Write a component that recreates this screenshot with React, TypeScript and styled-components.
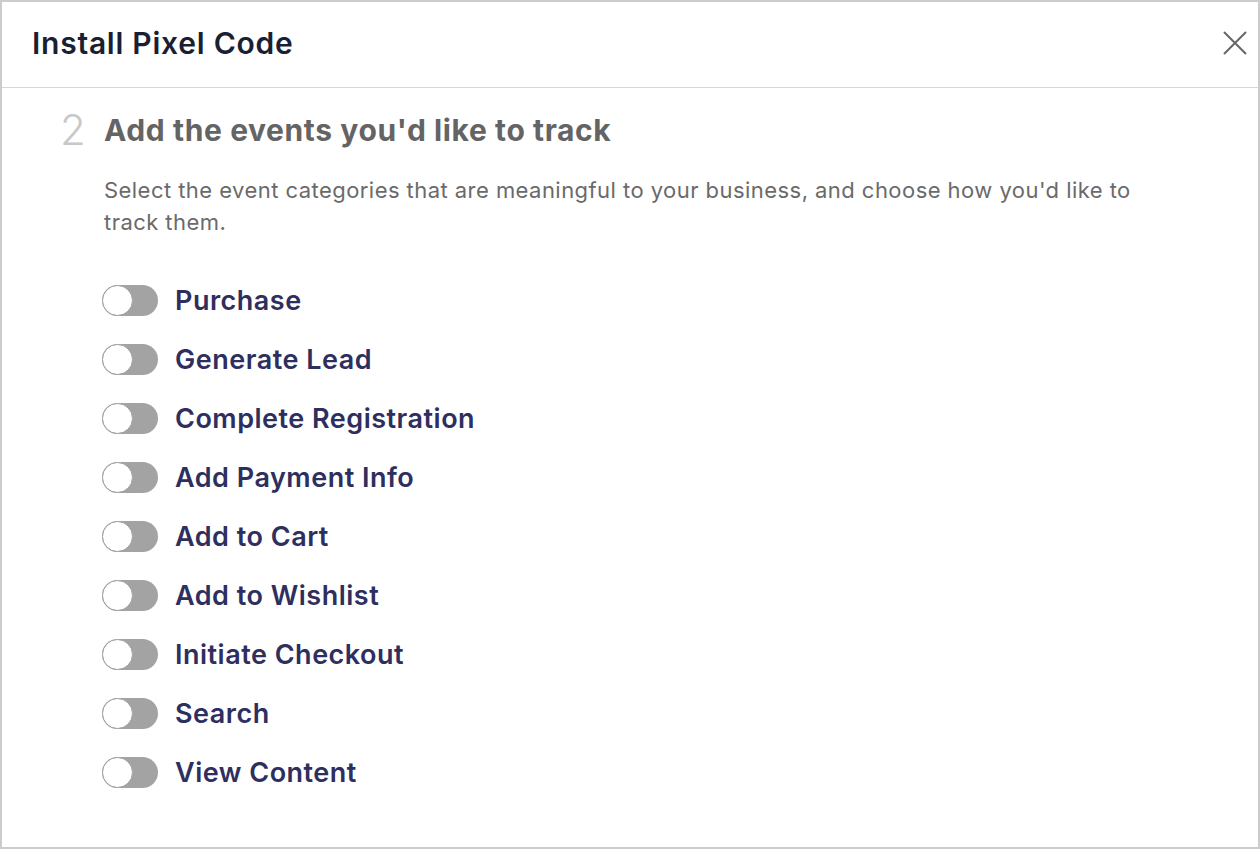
import React from "react";
import styled, { createGlobalStyle } from "styled-components";

const Global = createGlobalStyle`
  html, body { margin: 0; padding: 0; background: #fff; }
  body { font-family: Inter, "Noto Sans", sans-serif; }
`;

const Frame = styled.div`
  box-sizing: border-box;
  width: 1260px;
  height: 849px;
  border: 2px solid #cccccc;
  background: #fff;
  display: flex;
  flex-direction: column;
`;

const Header = styled.header`
  height: 85px;
  border-bottom: 1px solid #d6d2f2;
  display: flex;
  align-items: center;
  justify-content: space-between;
  padding: 0 10px 0 30px;
`;

const Title = styled.h1`
  margin: 0 0 4px;
  font-size: 30px;
  font-weight: 600;
  color: #1a1f33;
  letter-spacing: 0.75px;
`;

const CloseButton = styled.button`
  border: 0;
  background: none;
  padding: 0;
  width: 26px;
  height: 26px;
  margin-bottom: 4px;
  display: flex;
  align-items: center;
  justify-content: center;
  cursor: pointer;
`;

const Body = styled.main`
  padding: 18px 0 0 58px;
  display: flex;
  flex-direction: column;
`;

const StepRow = styled.div`
  display: flex;
  align-items: center;
  gap: 20px;
  height: 48px;
`;

const StepNumber = styled.span`
  font-size: 42px;
  font-weight: 300;
  color: #c8c8c8;
  width: 24px;
  line-height: 1;
`;

const StepTitle = styled.h2`
  margin: 0;
  font-size: 30px;
  font-weight: 700;
  color: #646464;
  letter-spacing: 0.6px;
`;

const Description = styled.p`
  margin: 20px 0 0 44px;
  max-width: 1065px;
  font-size: 22px;
  line-height: 32px;
  color: #6a6a6a;
  letter-spacing: 0.45px;
`;

const EventList = styled.ul`
  list-style: none;
  margin: 47px 0 0 42px;
  padding: 0;
  display: flex;
  flex-direction: column;
  gap: 28px;
`;

const EventRow = styled.li`
  display: flex;
  align-items: center;
  gap: 17px;
  height: 31px;
`;

const Track = styled.span`
  position: relative;
  box-sizing: border-box;
  width: 56px;
  height: 31px;
  border-radius: 16px;
  background: #a3a3a3;
  flex-shrink: 0;
`;

const Knob = styled.span`
  position: absolute;
  left: 0;
  top: 0;
  box-sizing: border-box;
  width: 31px;
  height: 31px;
  border-radius: 50%;
  background: #fff;
  border: 1.5px solid #a0a0a0;
`;

const EventLabel = styled.span`
  font-size: 27px;
  font-weight: 600;
  color: #2e2f5e;
  letter-spacing: 0.5px;
`;

const events = [
  "Purchase",
  "Generate Lead",
  "Complete Registration",
  "Add Payment Info",
  "Add to Cart",
  "Add to Wishlist",
  "Initiate Checkout",
  "Search",
  "View Content",
];

export default function App() {
  return (
    <>
      <Global />
      <Frame>
        <Header>
          <Title>Install Pixel Code</Title>
          <CloseButton aria-label="Close">
            <svg width="24" height="24" viewBox="0 0 24 24">
              <path d="M1 1 L23 23 M23 1 L1 23" stroke="#666" strokeWidth="2" fill="none" />
            </svg>
          </CloseButton>
        </Header>
        <Body>
          <StepRow>
            <StepNumber>2</StepNumber>
            <StepTitle>Add the events you'd like to track</StepTitle>
          </StepRow>
          <Description>
            Select the event categories that are meaningful to your business, and choose how you'd like to track them.
          </Description>
          <EventList>
            {events.map((e) => (
              <EventRow key={e}>
                <Track>
                  <Knob />
                </Track>
                <EventLabel>{e}</EventLabel>
              </EventRow>
            ))}
          </EventList>
        </Body>
      </Frame>
    </>
  );
}
